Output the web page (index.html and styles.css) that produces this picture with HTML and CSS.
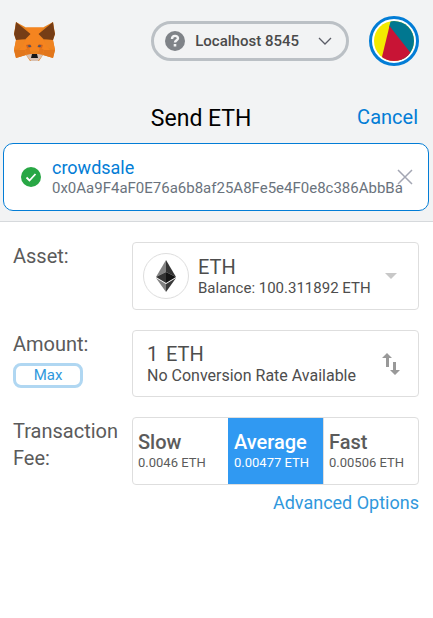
FILE: index.html
```html
<!DOCTYPE html>
<html lang="en">
<head>
<meta charset="utf-8">
<meta name="viewport" content="width=device-width, initial-scale=1">
<title>Send ETH</title>
<link rel="stylesheet" href="styles.css">
</head>
<body>
<header class="app-header">
  <svg class="fox" viewBox="0 0 41 41" aria-hidden="true">
    <path fill="#e8821e" d="M2 1 12 6.500h17L39 1l2 12-2 6 2 10-2 8-10-3-4 6h-9l-4-6-10 3-2-8 2-10-2-6z"/>
    <path fill="#f5841f" d="M12 6.500h17l-4 7 5 6 6 10-9 2-4-2h-5l-4 2-9-2 6-10 5-6z"/>
    <path fill="#763d16" d="M2 1 16.500 13 11 18.500 2 19 0 13 1 8zM39 1 24.500 13 30 18.500l9 .5 2-6-1-5z"/>
    <path fill="#e2761b" d="M0 29h11l1 5-10 3zM41 29H30l-1 5 10 3z"/>
    <path fill="#f08421" d="M2 19l9-.5L9 26l-9 3zM39 19l-9-.5 2 7.500 9 3z"/>
    <path fill="#e4761b" d="M11 29l4-3 2 7-4 1zM30 29l-4-3-2 7 4 1z"/>
    <path fill="#d7651b" d="M12 24l4-1 2 3-5 1zM29 24l-4-1-2 3 5 1z"/>
    <path fill="#4b536b" d="M13.500 24.500l3-.5.5 2-2 .3zM27.500 24.500l-3-.5-.5 2 2 .3z"/>
    <path fill="#d7c1b3" d="M12 34l5-1h7l5 1-5 6h-7z"/>
    <path fill="#161616" d="M18 33h5l1 4h-7z"/>
  </svg>
  <button class="network" type="button">
    <svg class="network-icon" viewBox="0 0 20 20" aria-hidden="true"><circle cx="10" cy="10" r="10" fill="#7f8388"/><path d="M7 8c0-4 6-4 6-.8 0 2-3 2-3 4.300" fill="none" stroke="#f2f3f4" stroke-width="2.400"/><path d="M8.700 13h2.600v2.500H8.700z" fill="#f2f3f4"/></svg>
    <span>Localhost 8545</span>
    <svg class="chevron" viewBox="0 0 14 8" aria-hidden="true"><path d="M1 1l6 6 6-6" fill="none" stroke="#5b5d67" stroke-width="1.300"/></svg>
  </button>
  <button class="account" type="button" aria-label="Account">
    <svg viewBox="0 0 40 40" aria-hidden="true"><defs><clipPath id="disc"><circle cx="20" cy="20" r="20"/></clipPath></defs><g clip-path="url(#disc)"><path fill="#f3ea00" d="M0 0h40v40H0z"/><path fill="#017790" d="M17-1h24v40H20L15 6z"/><path fill="#c81435" d="M15.500 5 43 40H7z"/></g></svg>
  </button>
</header>
<main>
  <section class="recipient-area">
    <div class="title-row">
      <h1>Send ETH</h1>
      <a class="cancel" href="#">Cancel</a>
    </div>
    <div class="recipient">
      <svg class="check" viewBox="0 0 20 20" aria-hidden="true"><circle cx="10" cy="10" r="10" fill="#28a745"/><path d="M5.500 10.500l3 3 6-6.500" fill="none" stroke="#fff" stroke-width="1.800"/></svg>
      <div class="recipient-text">
        <div class="name">crowdsale</div>
        <div class="address">0x0Aa9F4aF0E76a6b8af25A8Fe5e4F0e8c386AbbBa</div>
      </div>
      <button class="remove" type="button" aria-label="Remove recipient"><svg viewBox="0 0 16 16" aria-hidden="true"><path d="M1 1l14 14M15 1L1 15" stroke="#a3a6b3" stroke-width="1.500"/></svg></button>
    </div>
  </section>
  <form class="form">
    <div class="row">
      <div class="label">Asset:</div>
      <button class="field asset" type="button">
        <span class="token"><svg viewBox="0 0 20 32" aria-hidden="true"><path fill="#828282" d="M10 0v12L0 17z"/><path fill="#343434" d="M10 0v12l10 5z"/><path fill="#343434" d="M0 17l10-5v11z"/><path fill="#141414" d="M20 17l-10-5v11z"/><path fill="#828282" d="M0 18l10 6v8z"/><path fill="#393939" d="M20 18l-10 6v8z"/></svg></span>
        <span class="asset-text"><span class="primary">ETH</span><span class="secondary">Balance: 100.311892 ETH</span></span>
        <svg class="caret" viewBox="0 0 12 6" aria-hidden="true"><path d="M0 0h12L6 6z" fill="#c8c8c8"/></svg>
      </button>
    </div>
    <div class="row">
      <div class="label"><label for="amount">Amount:</label><button class="max" type="button">Max</button></div>
      <div class="field amount">
        <div class="amount-text">
          <div class="primary amount-line"><input id="amount" type="text" value="1"><span>ETH</span></div>
          <div class="rate">No Conversion Rate Available</div>
        </div>
        <button class="swap" type="button" aria-label="Swap currency"><svg viewBox="0 0 18 22" aria-hidden="true"><path d="M5 0 10 5H7v9H4V5H0zM11 9h3v8h4l-5 5-5-5h3z" fill="#999"/></svg></button>
      </div>
    </div>
    <div class="row">
      <div class="label" id="fee-label">Transaction Fee:</div>
      <div class="fees" role="group" aria-labelledby="fee-label">
        <button class="fee" type="button"><span class="speed">Slow</span><span class="cost">0.0046 ETH</span></button>
        <button class="fee selected" type="button" aria-pressed="true"><span class="speed">Average</span><span class="cost">0.00477 ETH</span></button>
        <button class="fee" type="button"><span class="speed">Fast</span><span class="cost">0.00506 ETH</span></button>
      </div>
    </div>
    <a class="advanced" href="#">Advanced Options</a>
  </form>
</main>
</body>
</html>
```
FILE: styles.css
```css
* { box-sizing: border-box; }
body { margin: 0; background: #fff; color: #5b5b5b; font-family: Roboto, "Liberation Sans", sans-serif; }
button, input { font: inherit; color: inherit; padding: 0; margin: 0; border: 0; background: none; }
button { cursor: pointer; text-align: left; }
a { text-decoration: none; }
svg { display: block; flex: none; }

.app-header { display: flex; align-items: center; height: 82px; padding: 0 14px; background: #f2f3f4; }
.fox { width: 41px; height: 41px; margin-right: auto; }
.network { display: flex; align-items: center; height: 40px; padding: 0 14px 0 11px; border: 3px solid #bbc0c5; border-radius: 20px; color: #4a4a4a; font-size: 15px; font-weight: 500; }
.network-icon { width: 20px; height: 20px; margin-right: 10px; }
.chevron { width: 14px; height: 8px; margin-left: 19px; }
.account { width: 50px; height: 50px; margin-left: 20px; padding: 2px; border: 3px solid #037dd6; border-radius: 50%; background: #fff; }
.account svg { width: 40px; height: 40px; }

.recipient-area { padding: 18px 4px 10px 3px; background: #f2f3f4; border-bottom: 1px solid #d6d9dc; }
.title-row { display: grid; grid-template-columns: 3fr auto 4fr; align-items: center; height: 36px; margin: 0 11px 7px 23px; }
h1 { grid-column: 2; margin: 0; color: #000; font-size: 23px; font-weight: 400; line-height: 38px; }
.cancel { justify-self: end; color: #037dd6; font-size: 20px; line-height: 32px; margin-bottom: 4px; }
.recipient { display: flex; align-items: center; height: 68px; padding: 0 15px 0 17px; background: #fff; border: 1px solid #037dd6; border-radius: 10px; }
.check { width: 20px; height: 20px; margin-right: 11px; }
.recipient-text { flex: 1; min-width: 0; }
.name { color: #037dd6; font-size: 18px; line-height: 22px; }
.address { color: #6a737d; font-size: 15px; line-height: 18px; white-space: nowrap; }
.remove svg { width: 16px; height: 16px; }

.form { display: flex; flex-direction: column; gap: 20px; padding: 20px 14px 20px 13px; }
.row { display: grid; grid-template-columns: 119px 1fr; }
.label { padding-top: 1px; font-size: 20px; line-height: 27px; }
.label label { display: block; }
.field { display: flex; align-items: center; height: 68px; border: 1px solid #dedede; border-radius: 4px; color: #4d4d4d; }
.asset { padding: 0 21px 0 10px; }
.token { display: flex; align-items: center; justify-content: center; width: 46px; height: 46px; margin-right: 9px; border: 1px solid #dedede; border-radius: 50%; }
.token svg { width: 20px; height: 32px; }
.asset-text { flex: 1; }
.primary { display: block; font-size: 20px; line-height: 24px; }
.secondary { display: block; font-size: 15px; line-height: 19px; }
.caret { width: 12px; height: 6px; }
.amount { height: 67px; padding: 0 18px 0 14px; }
.amount-text { flex: 1; }
.amount-line { display: flex; gap: 6px; }
.amount-line input { width: 13px; height: 24px; outline: 0; }
.rate { font-size: 16px; line-height: 19px; }
.swap svg { width: 18px; height: 22px; }
.max { display: block; width: 70px; height: 25px; margin-top: 5px; border: 3px solid #b0d7f2; border-radius: 8px; color: #3098dc; font-size: 15px; line-height: 19px; text-align: center; }
.fees { display: grid; grid-template-columns: repeat(3, 1fr); height: 68px; border: 1px solid #dedede; border-radius: 4px; overflow: hidden; }
.fee { padding: 2px 0 0 5px; }
.fee + .fee { border-left: 1px solid #dedede; }
.speed { display: block; font-size: 20px; font-weight: 500; line-height: 22px; }
.cost { display: block; font-size: 13px; line-height: 20px; white-space: nowrap; }
.fee.selected { background: #3099f2; border-left-color: #3099f2; color: #fff; }
.advanced { align-self: flex-end; margin-top: -14px; color: #3098dc; font-size: 18px; line-height: 24px; }
```
